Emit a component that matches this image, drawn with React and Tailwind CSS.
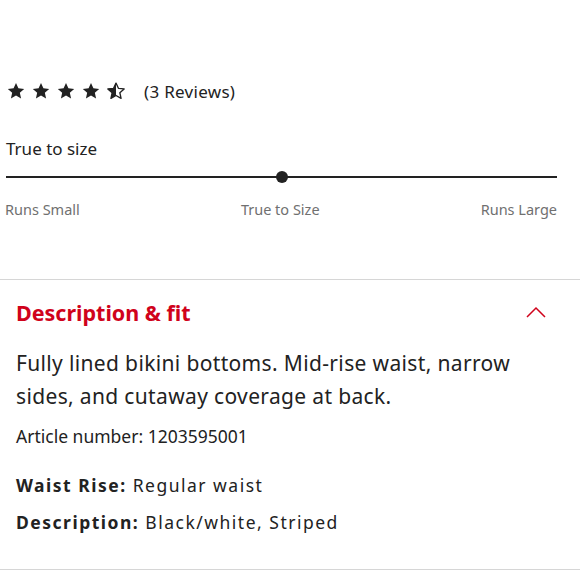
import React from "react";

const Star = ({ half }) => (
  <svg width="20" height="20" viewBox="0 0 24 24">
    {half ? (
      <>
        <path d="M12 2.5l2.9 6.3 6.9.7-5.2 4.6 1.5 6.8L12 17.4l-6.1 3.5 1.5-6.8L2.2 9.5l6.9-.7z" fill="none" stroke="#222" strokeWidth="1.6" strokeLinejoin="round" />
        <path d="M12 2.5L9.1 8.8l-6.9.7 5.2 4.6-1.5 6.8L12 17.4z" fill="#222" />
      </>
    ) : (
      <path d="M12 2.5l2.9 6.3 6.9.7-5.2 4.6 1.5 6.8L12 17.4l-6.1 3.5 1.5-6.8L2.2 9.5l6.9-.7z" fill="#222" />
    )}
  </svg>
);

export default function App() {
  return (
    <div className="w-[580px] h-[580px] bg-white text-[#222] overflow-hidden" style={{ fontFamily: "'Noto Sans', Lato, sans-serif" }}>
      <div className="pt-[81px] px-[6px] flex items-center">
        <div className="flex gap-[5px]">
          <Star /><Star /><Star /><Star /><Star half />
        </div>
        <span className="ml-[18px] text-[17px] leading-none tracking-[0.3px]">(3 Reviews)</span>
      </div>
      <div className="mt-[39px] px-[6px] text-[17px] leading-none">True to size</div>
      <div className="mt-[14px] mx-[6px] mr-[23px] relative h-[12px] flex items-center">
        <div className="w-full h-[2px] bg-[#222]"></div>
        <div className="absolute left-[270px] top-0 w-[12px] h-[12px] rounded-full bg-[#222]"></div>
      </div>
      <div className="mt-[19px] pl-[5px] pr-[23px] flex justify-between text-[14.5px] text-[#707070] leading-none">
        <span>Runs Small</span>
        <span>True to Size</span>
        <span>Runs Large</span>
      </div>
      <div className="mt-[62px] h-px bg-[#d6d6d6]"></div>
      <div className="px-[16px]">
        <div className="mt-[22px] flex items-center justify-between">
          <span className="text-[21.5px] font-bold text-[#d0021b] leading-none">Description &amp; fit</span>
          <svg width="20" height="12" viewBox="0 0 20 12" className="mr-[18px]">
            <path d="M1 11L10 2l9 9" fill="none" stroke="#d0021b" strokeWidth="1.5" />
          </svg>
        </div>
        <p className="mt-[24px] text-[21px] leading-[33px] tracking-[0.35px]">Fully lined bikini bottoms. Mid-rise waist, narrow sides, and cutaway coverage at back.</p>
        <p className="mt-[15px] text-[17.5px] leading-none">Article number: 1203595001</p>
        <p className="mt-[31px] text-[17.5px] leading-none tracking-[1.5px]"><span className="font-bold">Waist Rise:</span> Regular waist</p>
        <p className="mt-[20px] text-[17.5px] leading-none tracking-[1.5px]"><span className="font-bold">Description:</span> Black/white, Striped</p>
      </div>
      <div className="mt-[37px] h-px bg-[#d6d6d6]"></div>
    </div>
  );
}
